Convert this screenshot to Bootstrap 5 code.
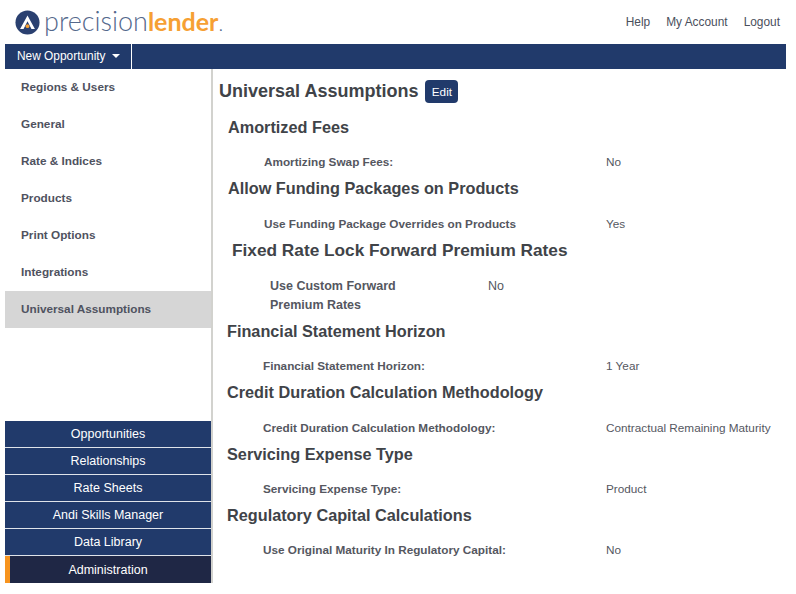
<!DOCTYPE html>
<html lang="en">
<head>
<meta charset="utf-8">
<title>Universal Assumptions</title>
<link href="https://cdn.jsdelivr.net/npm/bootstrap@5.3.0/dist/css/bootstrap.min.css" rel="stylesheet">
<style>
body{font-family:"Liberation Sans",Arial,sans-serif;background:#fff;color:#404040;font-size:11.75px;width:796px;height:594px;overflow:hidden}
.pl-top{height:44px;padding:0 16px 0 15px}
.pl-logo{font-family:Lato,"Liberation Sans",sans-serif;font-size:27px;line-height:1;color:#54688c;font-weight:300;padding-bottom:4px}
.pl-logo b{color:#f6a033;font-weight:700;font-size:25px}
.pl-dot{color:#54688c;font-size:20px}
.pl-links{padding-top:2px}
.pl-top a{color:#4a4f5c;text-decoration:none;font-size:11.9px}
.pl-bar{height:25px;margin:0 10px 0 5px;background:#213a6b}
.pl-new{width:127px;border-right:1px solid #fff;color:#fff;font-size:11.9px;padding:1px 0 0 12px;height:25px}
.pl-caret{width:0;height:0;border-left:4px solid transparent;border-right:4px solid transparent;border-top:4px solid #fff;margin-left:6px;margin-bottom:2px}
.pl-wrap{margin-left:5px;height:514px}
.pl-side{width:208px;border-right:2px solid #d2d2ce;height:514px}
.pl-item{height:37px;padding:0 0 2px 16px;font-weight:700;color:#4f5260;font-size:11.75px}
.pl-item.on{background:#d6d6d6}
.pl-mod{height:27px;background:#213a6b;color:#fff;font-size:12.5px;border-bottom:1px solid #dfe3ea}
.pl-mod.on{background:#1f2745;border-left:5px solid #f7941e;border-bottom:0;padding:1px 5px 0 0}
.pl-main{width:574px;padding-left:6px}
.pl-h1{font-size:18px;font-weight:700;color:#404348;margin:0}
.pl-title{height:48px;padding-bottom:3px}
.pl-edit{background:#213a6b;color:#fff;border:0;border-radius:4px;font-size:11.75px;padding:0;width:33px;height:23px;margin-left:7px}
.pl-h2{font-size:16.25px;font-weight:700;color:#404348;margin:0;line-height:20px}
.pl-h2.big{font-size:17.25px}
.pl-row{height:41.4px;padding-top:9px}
.pl-k{font-weight:700;color:#55575f}
.pl-v{color:#55575f}
.pl-s1{padding-left:9px}.pl-s2{padding-left:13px}.pl-s3{padding-left:8px}
.pl-kw{width:378px;padding-left:36px;flex:none}
.pl-s3 .pl-kw{width:379px}
.pl-tall{height:61px;padding-top:17.5px;font-size:12.5px;line-height:19px}
.pl-tall .pl-k{width:256px;padding:0 88px 0 38px;flex:none}
</style>
</head>
<body>
<div class="pl-top d-flex align-items-center justify-content-between">
  <div class="d-flex align-items-center">
    <svg width="25" height="25" viewBox="0 0 27 27" class="me-1" aria-hidden="true"><circle cx="13.5" cy="13.5" r="13" fill="#2a4070"/><path d="M13.5 6 L21.5 20.5 H17.8 L13.5 12.2 L9.2 20.5 H5.5 Z" fill="#fff"/><circle cx="13.5" cy="17.5" r="2" fill="#f6a033"/></svg>
    <span class="pl-logo">precision<b>lender</b><span class="pl-dot">.</span></span>
  </div>
  <div class="pl-links d-flex gap-3"><a href="#">Help</a><a href="#">My Account</a><a href="#">Logout</a></div>
</div>
<div class="pl-bar d-flex"><div class="pl-new d-flex align-items-center">New Opportunity<span class="pl-caret"></span></div></div>
<div class="pl-wrap d-flex">
  <div class="pl-side d-flex flex-column">
    <div class="pl-item d-flex align-items-center">Regions &amp; Users</div>
    <div class="pl-item d-flex align-items-center">General</div>
    <div class="pl-item d-flex align-items-center">Rate &amp; Indices</div>
    <div class="pl-item d-flex align-items-center">Products</div>
    <div class="pl-item d-flex align-items-center">Print Options</div>
    <div class="pl-item d-flex align-items-center">Integrations</div>
    <div class="pl-item on d-flex align-items-center">Universal Assumptions</div>
    <div class="mt-auto">
      <div class="pl-mod d-flex align-items-center justify-content-center">Opportunities</div>
      <div class="pl-mod d-flex align-items-center justify-content-center">Relationships</div>
      <div class="pl-mod d-flex align-items-center justify-content-center">Rate Sheets</div>
      <div class="pl-mod d-flex align-items-center justify-content-center">Andi Skills Manager</div>
      <div class="pl-mod d-flex align-items-center justify-content-center">Data Library</div>
      <div class="pl-mod on d-flex align-items-center justify-content-center">Administration</div>
    </div>
  </div>
  <div class="pl-main">
    <div class="pl-title d-flex align-items-center"><h1 class="pl-h1">Universal Assumptions</h1><button class="pl-edit" type="button">Edit</button></div>
    <div class="pl-s1"><h2 class="pl-h2">Amortized Fees</h2><div class="pl-row d-flex align-items-center"><div class="pl-kw pl-k">Amortizing Swap Fees:</div><div class="pl-v">No</div></div></div>
    <div class="pl-s1"><h2 class="pl-h2">Allow Funding Packages on Products</h2><div class="pl-row d-flex align-items-center"><div class="pl-kw pl-k">Use Funding Package Overrides on Products</div><div class="pl-v">Yes</div></div></div>
    <div class="pl-s2"><h2 class="pl-h2 big">Fixed Rate Lock Forward Premium Rates</h2><div class="pl-tall d-flex align-items-start"><div class="pl-k">Use Custom Forward Premium Rates</div><div class="pl-v">No</div></div></div>
    <div class="pl-s3"><h2 class="pl-h2">Financial Statement Horizon</h2><div class="pl-row d-flex align-items-center"><div class="pl-kw pl-k">Financial Statement Horizon:</div><div class="pl-v">1 Year</div></div></div>
    <div class="pl-s3"><h2 class="pl-h2">Credit Duration Calculation Methodology</h2><div class="pl-row d-flex align-items-center"><div class="pl-kw pl-k">Credit Duration Calculation Methodology:</div><div class="pl-v">Contractual Remaining Maturity</div></div></div>
    <div class="pl-s3"><h2 class="pl-h2">Servicing Expense Type</h2><div class="pl-row d-flex align-items-center"><div class="pl-kw pl-k">Servicing Expense Type:</div><div class="pl-v">Product</div></div></div>
    <div class="pl-s3"><h2 class="pl-h2">Regulatory Capital Calculations</h2><div class="pl-row d-flex align-items-center"><div class="pl-kw pl-k">Use Original Maturity In Regulatory Capital:</div><div class="pl-v">No</div></div></div>
  </div>
</div>
</body>
</html>
